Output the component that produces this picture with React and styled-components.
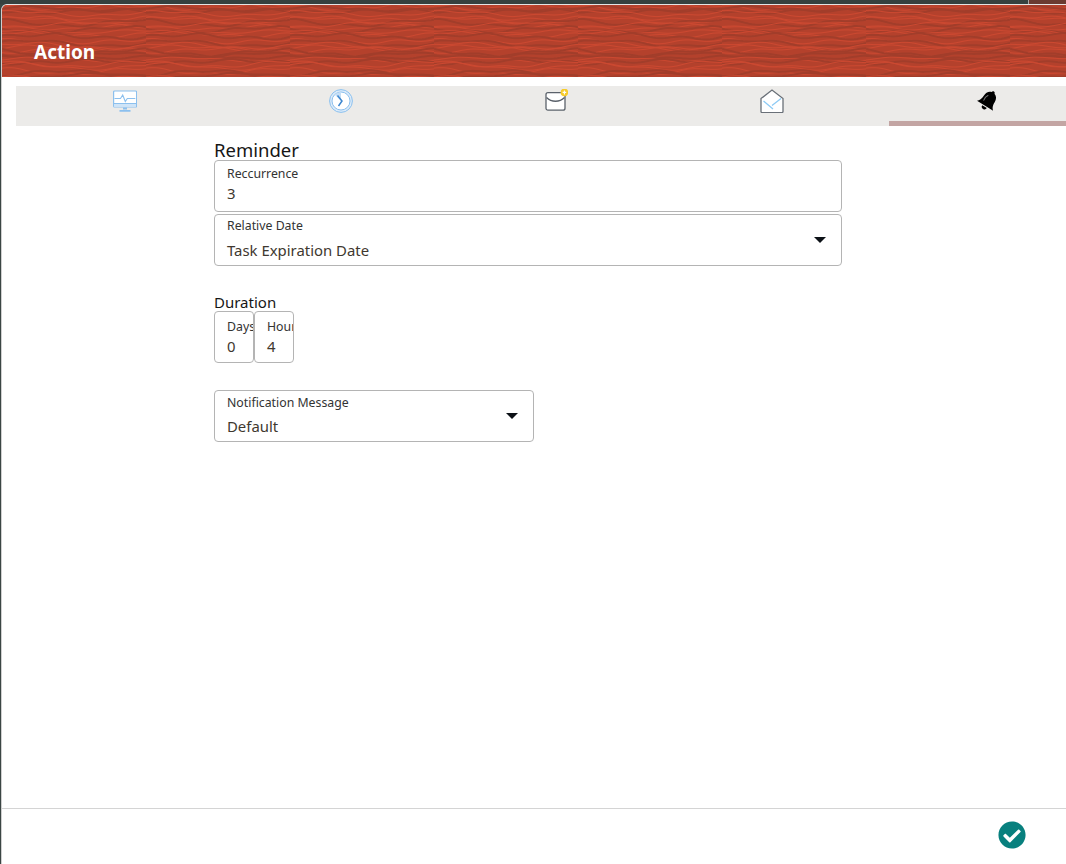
import { useMemo } from 'react';
import styled, { createGlobalStyle } from 'styled-components';
import { FaCheckCircle } from 'react-icons/fa';

const GlobalStyle = createGlobalStyle`
    html, body {
        margin: 0;
        height: 864px;
        overflow: hidden;
        background: #3b4644;
        font-family: "Noto Sans", "Open Sans", sans-serif;
        color: #212121;
    }
`;

const Page = styled.div`
    width: 1066px;
    height: 864px;
    display: flex;
    flex-direction: column;
    overflow: hidden;
`;

const TopStrip = styled.div`
    height: 4px;
    flex: none;
    display: flex;
    justify-content: flex-end;
    background: #35413f;
`;

const TopStripEdge = styled.div`
    width: 37px;
    border-left: 1px solid #a9a9a9;
    background: #6a3b31;
`;

const Modal = styled.div`
    flex: 1;
    min-height: 0;
    margin-left: 1px;
    display: flex;
    flex-direction: column;
    background: #fff;
    border-top: 1px solid #e4e4e4;
    border-left: 1px solid #cfcfcf;
    border-top-left-radius: 6px;
    overflow: hidden;
`;

const Header = styled.header`
    position: relative;
    flex: none;
    height: 72px;
    display: flex;
    align-items: flex-end;
    padding: 0 0 13px 32px;
    box-sizing: border-box;
    background: #b4412c;
    overflow: hidden;
`;

const WoodSvg = styled.svg`
    position: absolute;
    inset: 0;
    width: 100%;
    height: 100%;
`;

const Title = styled.h1`
    position: relative;
    margin: 0;
    font-size: 19px;
    line-height: 24px;
    font-weight: 700;
    color: #fff;
`;

const Tabs = styled.nav`
    flex: none;
    height: 40px;
    margin: 9px 0 0 14px;
    display: grid;
    grid-template-columns: repeat(5, 215.6px);
    background: #ecebe9;
`;

const Tab = styled.div`
    position: relative;
    display: flex;
    justify-content: center;
    padding: 3px 0 0 3px;
    box-sizing: border-box;

    &::after {
        content: '';
        display: ${(p) => (p.$active ? 'block' : 'none')};
        position: absolute;
        left: 11px;
        right: 7px;
        bottom: 0;
        height: 5px;
        background: #c3a5a3;
    }
`;

const Icon = styled.svg`
    width: 24px;
    height: 24px;
    display: block;
`;

const Main = styled.main`
    flex: 1;
    min-height: 0;
    padding-left: 212px;
`;

const Form = styled.form`
    width: 628px;
    display: flex;
    flex-direction: column;
`;

const Heading = styled.h2`
    margin: 14px 0 0;
    font-size: 18.5px;
    line-height: 20px;
    font-weight: 400;
    color: #161616;
`;

const SubHeading = styled.h3`
    margin: 27px 0 0;
    font-size: 15px;
    line-height: 18px;
    font-weight: 400;
    color: #161616;
`;

const Field = styled.div`
    position: relative;
    width: ${(p) => p.$width || '100%'};
    height: 52px;
    flex: none;
    box-sizing: border-box;
    margin-top: ${(p) => p.$top || 0}px;
    padding: ${(p) => p.$pad}px 0 0 12px;
    border: 1px solid #b4b4b4;
    border-radius: 4px;
    background: #fff;
    overflow: hidden;
`;

const FieldLabel = styled.div`
    font-size: 12.3px;
    line-height: 16px;
    color: #333;
    white-space: nowrap;
`;

const FieldValue = styled.div`
    margin-top: ${(p) => p.$gap}px;
    font-size: 14.9px;
    line-height: 20px;
    color: #40382f;
    white-space: nowrap;
`;

const Caret = styled.span`
    position: absolute;
    right: 15px;
    top: 22px;
    width: 0;
    height: 0;
    border-left: 6px solid transparent;
    border-right: 6px solid transparent;
    border-top: 6px solid #0c1116;
`;

const DurationRow = styled.div`
    display: flex;
`;

const Footer = styled.footer`
    flex: none;
    height: 56px;
    box-sizing: border-box;
    border-top: 1px solid #d4d4d4;
    display: flex;
    justify-content: flex-end;
    align-items: center;
    padding: 0 40px 3px 0;
`;

const ConfirmIcon = styled(FaCheckCircle)`
    width: 28px;
    height: 28px;
    color: #08807e;
`;

// wood grain for the header, one tile repeated across the bar
const buildGrain = () => {
    const lines = [];
    let seed = 11;
    const rand = () => {
        seed = (seed * 9301 + 49297) % 233280;
        return seed / 233280;
    };
    for (let y = -3; y < 76; y += 2.3) {
        const a = 1.2 + rand() * 2;
        const b = 0.5 + rand() * 1;
        const p = rand() * 6.28;
        const q = rand() * 6.28;
        let d = '';
        for (let x = 0; x <= 144; x += 3) {
            const yy = y + a * Math.sin(x / 24 + p) + b * Math.sin(x / 8 + q);
            d += `${x === 0 ? 'M' : 'L'}${x} ${yy.toFixed(1)} `;
        }
        const r = rand();
        if (r < 0.42) lines.push({ d, color: '#cc4830', width: 1 });
        else if (r < 0.85) lines.push({ d, color: '#a23d2a', width: 2 });
    }
    return lines;
};

const WoodTexture = () => {
    const lines = useMemo(buildGrain, []);
    return (
        <WoodSvg aria-hidden="true">
            <defs>
                <pattern id="wood" width="144" height="72" patternUnits="userSpaceOnUse">
                    {lines.map((l, i) => (
                        <path key={i} d={l.d} fill="none" stroke={l.color} strokeWidth={l.width} />
                    ))}
                </pattern>
            </defs>
            <rect width="100%" height="100%" fill="url(#wood)" />
        </WoodSvg>
    );
};

const MonitorIcon = () => (
    <Icon viewBox="0 0 24 24">
        <rect x="0.6" y="2" width="23" height="16" rx="1" fill="#fff" stroke="#8cc0ee" strokeWidth="1.2" />
        <rect x="1" y="14.6" width="22" height="3.2" fill="#cfe4f7" />
        <path d="M1 14.5h22" stroke="#8cc0ee" strokeWidth="1.1" />
        <path d="M1.5 9.5h6l2.2-3.5 2.6 6.500 2-3h8" fill="none" stroke="#8cc0ee" strokeWidth="1.1" />
        <path d="M10 18.500h4v2h-4zM6.500 21h11v1.800h-11z" fill="#8cc0ee" />
    </Icon>
);

const ClockIcon = () => (
    <Icon viewBox="0 0 24 24">
        <circle cx="12" cy="12" r="11.4" fill="#dcebf9" stroke="#8cc0ee" strokeWidth="1" />
        <circle cx="12" cy="12" r="9" fill="#fff" stroke="#8cc0ee" strokeWidth="1" />
        <path d="M12 12V3a9 9 0 0 0-6.400 2.600z" fill="#c5def5" />
        <path d="M8.500 6.500 13 12l-3.500 5" fill="none" stroke="#3f87cf" strokeWidth="1.500" />
    </Icon>
);

const NewMailIcon = () => (
    <Icon viewBox="0 0 24 24">
        <g transform="translate(1 -1)">
            <rect x="1" y="4.600" width="19" height="17.600" rx="2" fill="#fff" stroke="#5b626b" strokeWidth="1.300" />
            <path d="M1.500 9.500c5 5 13 5 18 0" fill="none" stroke="#5b626b" strokeWidth="1.300" />
            <circle cx="19.400" cy="4.400" r="3.800" fill="#f7cb2a" />
            <path d="M19.400 2.400v4M17.600 4.400h3.600" stroke="#fff" strokeWidth="1.100" />
        </g>
    </Icon>
);

const OpenMailIcon = () => (
    <Icon viewBox="0 0 24 24">
        <path d="M1 9.600 12 1l11 8.600v13a1 1 0 0 1-1 1H2a1 1 0 0 1-1-1z" fill="#fff" stroke="#6a7078" strokeWidth="1.300" />
        <path d="M3.500 12 13 20M12 16.500l9-7" fill="none" stroke="#8ecbf5" strokeWidth="1.300" />
    </Icon>
);

const BellIcon = () => (
    <Icon viewBox="0 0 24 24">
        <g transform="rotate(32 12 12)">
            <path d="M12 .8c1 0 1.700.8 1.700 1.700 3.100.8 4.600 3.600 4.600 7 0 4.400 1.200 6.300 3.200 8H2.500c2-1.700 3.200-3.600 3.200-8 0-3.400 1.500-6.200 4.600-7C10.300 1.600 11 .8 12 .8z" fill="#000" />
            <path d="M9.300 18.600a2.700 2.700 0 0 0 5.400 0z" fill="#000" />
            <path d="M8 14c-.3-2-.2-5 1.200-7" fill="none" stroke="#777" strokeWidth="1" />
        </g>
    </Icon>
);

const App = () => {
    return (
        <Page>
            <GlobalStyle />
            <TopStrip>
                <TopStripEdge />
            </TopStrip>
            <Modal>
                <Header>
                    <WoodTexture />
                    <Title>Action</Title>
                </Header>
                <Tabs>
                    <Tab><MonitorIcon /></Tab>
                    <Tab><ClockIcon /></Tab>
                    <Tab><NewMailIcon /></Tab>
                    <Tab><OpenMailIcon /></Tab>
                    <Tab $active><BellIcon /></Tab>
                </Tabs>
                <Main>
                    <Form>
                        <Heading>Reminder</Heading>
                        <Field $pad={5}>
                            <FieldLabel>Reccurrence</FieldLabel>
                            <FieldValue $gap={1}>3</FieldValue>
                        </Field>
                        <Field $pad={3} $top={2}>
                            <FieldLabel>Relative Date</FieldLabel>
                            <FieldValue $gap={6}>Task Expiration Date</FieldValue>
                            <Caret />
                        </Field>
                        <SubHeading>Duration</SubHeading>
                        <DurationRow>
                            <Field $pad={7} $width="40px">
                                <FieldLabel>Days</FieldLabel>
                                <FieldValue $gap={1}>0</FieldValue>
                            </Field>
                            <Field $pad={7} $width="40px">
                                <FieldLabel>Hours</FieldLabel>
                                <FieldValue $gap={1}>4</FieldValue>
                            </Field>
                        </DurationRow>
                        <Field $pad={4} $width="320px" $top={27}>
                            <FieldLabel>Notification Message</FieldLabel>
                            <FieldValue $gap={5}>Default</FieldValue>
                            <Caret />
                        </Field>
                    </Form>
                </Main>
                <Footer>
                    <ConfirmIcon />
                </Footer>
            </Modal>
        </Page>
    );
};

export default App;
